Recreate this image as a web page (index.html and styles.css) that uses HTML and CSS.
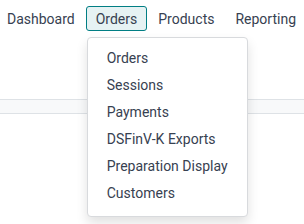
FILE: index.html
```html
<!DOCTYPE html>
<html lang="en">
  <head>
    <meta charset="UTF-8" />
    <title>Point of Sale Menu</title>
    <link rel="stylesheet" href="styles.css">
  </head>
  <body>
    <div class="navbar">
      <div class="nav-item">Dashboard</div>
      <div class="nav-item open">
        Orders
        <div class="dropdown-menu">
          <div class="dropdown-item">Orders</div>
          <div class="dropdown-item">Sessions</div>
          <div class="dropdown-item">Payments</div>
          <div class="dropdown-item">DSFinV-K Exports</div>
          <div class="dropdown-item">Preparation Display</div>
          <div class="dropdown-item">Customers</div>
        </div>
      </div>
      <div class="nav-item">Products</div>
      <div class="nav-item">Reporting</div>
    </div>

    <div class="control-panel"></div>
    <div class="toolbar"></div>
  </body>
</html>
```

FILE: styles.css
```css
html {
  overflow: hidden;
}

body,
html {
  margin: 0;
  padding: 0;
  font-family: Roboto, "Noto Sans", sans-serif;
  background-color: #ffffff;
  color: #374151;
  font-size: 14px;
}

body {
  height: 224px;
}

.navbar {
  display: flex;
  gap: 1px;
  margin-left: -3px;
  padding-top: 6px;
  height: 25px;
  white-space: nowrap;
}

.nav-item {
  position: relative;
  display: flex;
  align-items: center;
  padding: 1px 9px 0;
  height: 25px;
  border: 1px solid transparent;
  border-radius: 3px;
  box-sizing: border-box;
  color: #374151;
}

.nav-item.open {
  background-color: #e6f2f3;
  border-color: #017e84;
}

.control-panel {
  height: 68px;
}

.toolbar {
  height: 13px;
  background-color: #f8f9fa;
  border-top: 1px solid #dee2e6;
  border-bottom: 1px solid #dee2e6;
}

.dropdown-menu {
  position: absolute;
  top: 30px;
  left: 0;
  width: 159px;
  padding: 7px 0 9px;
  background-color: #ffffff;
  border: 1px solid #d8dadd;
  border-radius: 4px;
  box-shadow: 0 6px 12px rgba(0, 0, 0, 0.12);
  z-index: 10;
}

.dropdown-item {
  height: 27px;
  line-height: 27px;
  padding-left: 19px;
  color: #374151;
}
```
